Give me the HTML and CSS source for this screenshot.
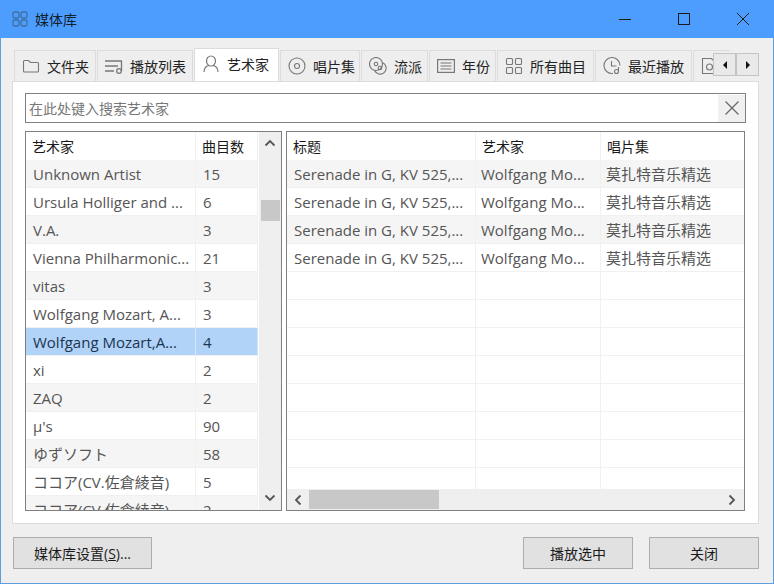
FILE: index.html
```html
<!DOCTYPE html>
<html lang="zh">
<head>
<meta charset="utf-8">
<title>媒体库</title>
<link rel="stylesheet" href="styles.css">
</head>
<body>
<div class="window">
  <header class="titlebar">
    <svg class="app-icon" width="16" height="16" viewBox="0 0 16 16"><g fill="none" stroke="#3f6f9f" stroke-width="1.3"><rect x="1" y="1" width="6" height="6" rx="1.5"/><rect x="9" y="1" width="6" height="6" rx="1.5"/><rect x="1" y="9" width="6" height="6" rx="1.5"/><rect x="9" y="9" width="6" height="6" rx="1.5"/></g></svg>
    <span class="title">媒体库</span>
    <div class="win-buttons">
      <svg class="win-btn" width="14" height="14" viewBox="0 0 14 14"><path d="M1 7.5h12" stroke="#1a1a1a" fill="none"/></svg>
      <svg class="win-btn" width="14" height="14" viewBox="0 0 14 14"><rect x="1.5" y="1.5" width="11" height="11" stroke="#1a1a1a" fill="none"/></svg>
      <svg class="win-btn" width="14" height="14" viewBox="0 0 14 14"><path d="M1 1l12 12M13 1L1 13" stroke="#1a1a1a" fill="none"/></svg>
    </div>
  </header>

  <main class="content">
    <div class="tabs-wrap">
      <div class="tabs">
        <div class="tab w-folder"><svg class="ico" width="18" height="18" viewBox="0 0 18 18"><path d="M1.5 4.5a1 1 0 0 1 1-1h4l2 2h7a1 1 0 0 1 1 1v7.500a1 1 0 0 1-1 1h-13a1 1 0 0 1-1-1z" fill="none" stroke="#777" stroke-width="1.1"/></svg><span>文件夹</span></div>
        <div class="tab w-list"><svg class="ico" width="18" height="18" viewBox="0 0 18 18"><g fill="none" stroke="#777" stroke-width="1.3"><path d="M0 4h17M0 9h13M0 14h9"/><path d="M16.500 4v10"/><circle cx="14" cy="14" r="2.300"/></g></svg><span>播放列表</span></div>
        <div class="tab active w-artist"><svg class="ico" width="18" height="18" viewBox="0 0 18 18"><g fill="none" stroke="#777" stroke-width="1.2"><ellipse cx="9" cy="6" rx="4.500" ry="5"/><path d="M2 17c0-4 2.500-6 5-6.500M16 17c0-4-2.500-6-5-6.500"/></g></svg><span>艺术家</span></div>
        <div class="tab w-album"><svg class="ico" width="18" height="18" viewBox="0 0 18 18"><g fill="none" stroke="#777" stroke-width="1.1"><circle cx="9" cy="9" r="8"/><circle cx="9" cy="9" r="2.500"/></g></svg><span>唱片集</span></div>
        <div class="tab w-genre"><svg class="ico" width="18" height="18" viewBox="0 0 18 18"><g fill="none" stroke="#777" stroke-width="1.1"><circle cx="7" cy="7" r="6.500"/><circle cx="7" cy="7" r="1.800"/><path d="M13.200 5.500a6 6 0 1 1-7.700 7.700"/><circle cx="11" cy="11" r="1.800"/></g></svg><span>流派</span></div>
        <div class="tab w-year"><svg class="ico" width="18" height="18" viewBox="0 0 18 18"><g fill="none" stroke="#777" stroke-width="1.200"><rect x="0.600" y="2.600" width="16.800" height="12.800"/><path d="M3.500 6h11M3.500 9h11M3.500 12h11"/></g></svg><span>年份</span></div>
        <div class="tab w-all"><svg class="ico" width="18" height="18" viewBox="0 0 18 18"><g fill="none" stroke="#777" stroke-width="1.100"><rect x="1.500" y="1.500" width="6" height="6" rx="1"/><rect x="10.500" y="1.500" width="6" height="6" rx="1"/><rect x="1.500" y="10.500" width="6" height="6" rx="1"/><rect x="10.500" y="10.500" width="6" height="6" rx="1"/></g></svg><span>所有曲目</span></div>
        <div class="tab w-recent"><svg class="ico" width="18" height="18" viewBox="0 0 18 18"><g fill="none" stroke="#777" stroke-width="1.100"><path d="M10 16.500A8 8 0 1 1 17 8.500"/><path d="M8.500 4v5h5"/><circle cx="13.500" cy="14.500" r="2"/><path d="M15.500 14.500V10"/></g></svg><span>最近播放</span></div>
        <div class="tab w-next"><svg class="ico" width="18" height="18" viewBox="0 0 18 18"><g fill="none" stroke="#777" stroke-width="1.100"><path d="M1.500 1.500h9l5 5v10h-14z"/><circle cx="8.500" cy="10" r="3"/></g></svg></div>
      </div>
      <div class="tab-scroller">
        <button class="scroll-btn" aria-label="向左"><svg width="6" height="8" viewBox="0 0 6 8"><path d="M5 0v8L1 4z" fill="#111"/></svg></button>
        <button class="scroll-btn" aria-label="向右"><svg width="6" height="8" viewBox="0 0 6 8"><path d="M1 0v8l4-4z" fill="#111"/></svg></button>
      </div>
    </div>

    <section class="pane">
      <div class="search">
        <span class="placeholder">在此处键入搜索艺术家</span>
        <span class="clear"><svg width="16" height="16" viewBox="0 0 16 16"><path d="M1.500 1.500l13 13M14.500 1.500l-13 13" stroke="#6b6b6b" stroke-width="1.300" fill="none"/></svg></span>
      </div>

      <div class="split">
        <div class="panel left-panel">
          <div class="table">
            <div class="row head"><div class="cell c-name">艺术家</div><div class="cell c-count">曲目数</div></div>
            <div class="row odd"><div class="cell c-name">Unknown Artist</div><div class="cell c-count">15</div></div>
            <div class="row"><div class="cell c-name">Ursula Holliger and ...</div><div class="cell c-count">6</div></div>
            <div class="row odd"><div class="cell c-name">V.A.</div><div class="cell c-count">3</div></div>
            <div class="row"><div class="cell c-name">Vienna Philharmonic...</div><div class="cell c-count">21</div></div>
            <div class="row odd"><div class="cell c-name">vitas</div><div class="cell c-count">3</div></div>
            <div class="row"><div class="cell c-name">Wolfgang Mozart, A...</div><div class="cell c-count">3</div></div>
            <div class="row selected"><div class="cell c-name">Wolfgang Mozart,A...</div><div class="cell c-count">4</div></div>
            <div class="row"><div class="cell c-name">xi</div><div class="cell c-count">2</div></div>
            <div class="row odd"><div class="cell c-name">ZAQ</div><div class="cell c-count">2</div></div>
            <div class="row"><div class="cell c-name">μ's</div><div class="cell c-count">90</div></div>
            <div class="row odd"><div class="cell c-name">ゆずソフト</div><div class="cell c-count">58</div></div>
            <div class="row"><div class="cell c-name">ココア(CV.佐倉綾音)</div><div class="cell c-count">5</div></div>
            <div class="row odd"><div class="cell c-name">ココア(CV.佐倉綾音)</div><div class="cell c-count">2</div></div>
          </div>
          <div class="vscroll">
            <svg class="arrow" width="12" height="8" viewBox="0 0 12 8"><path d="M1.500 6.500L6 2l4.500 4.500" stroke="#555" stroke-width="1.800" fill="none"/></svg>
            <div class="vthumb"></div>
            <svg class="arrow arrow-down" width="12" height="8" viewBox="0 0 12 8"><path d="M1.500 1.500L6 6l4.500-4.500" stroke="#555" stroke-width="1.800" fill="none"/></svg>
          </div>
        </div>

        <div class="panel right-panel">
          <div class="table">
            <div class="row head"><div class="cell c-title">标题</div><div class="cell c-artist">艺术家</div><div class="cell c-album">唱片集</div></div>
            <div class="row odd"><div class="cell c-title">Serenade in G, KV 525,...</div><div class="cell c-artist">Wolfgang Mo...</div><div class="cell c-album">莫扎特音乐精选</div></div>
            <div class="row"><div class="cell c-title">Serenade in G, KV 525,...</div><div class="cell c-artist">Wolfgang Mo...</div><div class="cell c-album">莫扎特音乐精选</div></div>
            <div class="row odd"><div class="cell c-title">Serenade in G, KV 525,...</div><div class="cell c-artist">Wolfgang Mo...</div><div class="cell c-album">莫扎特音乐精选</div></div>
            <div class="row"><div class="cell c-title">Serenade in G, KV 525,...</div><div class="cell c-artist">Wolfgang Mo...</div><div class="cell c-album">莫扎特音乐精选</div></div>
            <div class="row"><div class="cell c-title"></div><div class="cell c-artist"></div><div class="cell c-album"></div></div>
            <div class="row"><div class="cell c-title"></div><div class="cell c-artist"></div><div class="cell c-album"></div></div>
            <div class="row"><div class="cell c-title"></div><div class="cell c-artist"></div><div class="cell c-album"></div></div>
            <div class="row"><div class="cell c-title"></div><div class="cell c-artist"></div><div class="cell c-album"></div></div>
            <div class="row"><div class="cell c-title"></div><div class="cell c-artist"></div><div class="cell c-album"></div></div>
            <div class="row"><div class="cell c-title"></div><div class="cell c-artist"></div><div class="cell c-album"></div></div>
            <div class="row"><div class="cell c-title"></div><div class="cell c-artist"></div><div class="cell c-album"></div></div>
            <div class="row"><div class="cell c-title"></div><div class="cell c-artist"></div><div class="cell c-album"></div></div>
          </div>
          <div class="hscroll">
            <svg class="harrow" width="8" height="12" viewBox="0 0 8 12"><path d="M6.500 1.500L2 6l4.500 4.500" stroke="#555" stroke-width="1.800" fill="none"/></svg>
            <div class="hthumb"></div>
            <svg class="harrow harrow-right" width="8" height="12" viewBox="0 0 8 12"><path d="M1.500 1.500L6 6l-4.500 4.500" stroke="#555" stroke-width="1.800" fill="none"/></svg>
          </div>
        </div>
      </div>
    </section>

    <footer class="footer">
      <button class="btn btn-settings">媒体库设置(<u>S</u>)...</button>
      <div class="footer-right">
        <button class="btn">播放选中</button>
        <button class="btn">关闭</button>
      </div>
    </footer>
  </main>
</div>
</body>
</html>
```

FILE: styles.css
```css
* { box-sizing: border-box; }
html, body { margin: 0; padding: 0; }
body {
  width: 774px;
  height: 584px;
  overflow: hidden;
  font-family: "Open Sans", "Noto Sans CJK SC", sans-serif;
  font-size: 15px;
  color: #1a1a1a;
}
.window {
  width: 774px;
  height: 584px;
  display: flex;
  flex-direction: column;
  background: #efefef;
  border: 1px solid #5f9fe0;
  border-top: 0;
}
.titlebar {
  height: 38px;
  margin: 0 -1px;
  flex: none;
  display: flex;
  align-items: center;
  padding-left: 12px;
  background: #4d9dff;
}
.app-icon { flex: none; }
.title { margin-left: 7px; font-size: 14px; color: #10202f; }
.win-buttons {
  margin-left: auto;
  display: flex;
  align-items: center;
  gap: 45px;
  padding-right: 24px;
}
.win-btn { display: block; }
.content {
  flex: 1;
  display: flex;
  flex-direction: column;
  min-height: 0;
  padding: 10px 15px 14px 11px;
}
.tabs-wrap { position: relative; height: 33px; flex: none; margin-right: -1px; }
.tabs {
  display: flex;
  align-items: flex-end;
  height: 33px;
  padding-left: 2px;
  gap: 1px;
  overflow: hidden;
  width: 718px;
}
.tab {
  flex: none;
  height: 31px;
  display: flex;
  align-items: center;
  padding-left: 7px;
  background: #eeeeee;
  border: 1px solid #dcdcdc;
  border-bottom: 0;
  white-space: nowrap;
  font-size: 14px;
  color: #222;
}
.tab .ico { flex: none; margin-right: 7px; }
.tab.active { height: 33px; background: #fff; padding-bottom: 2px; }
.w-folder { width: 82px; }
.w-list { width: 96px; }
.w-artist { width: 85px; }
.w-album { width: 80px; }
.w-genre { width: 67px; }
.w-year { width: 67px; }
.w-all { width: 97px; }
.w-recent { width: 97px; }
.w-next { width: 40px; }
.tab-scroller {
  position: absolute;
  right: 0;
  top: 5px;
  display: flex;
}
.scroll-btn {
  width: 23px;
  height: 23px;
  padding: 0;
  display: flex;
  align-items: center;
  justify-content: center;
  background: #e9e9e9;
  border: 1px solid #c4c4c4;
}
.pane {
  flex: 1;
  min-height: 0;
  display: flex;
  flex-direction: column;
  background: #fff;
  border: 1px solid #dcdcdc;
  padding: 11px 12px 12px 12px;
  margin-right: -1px;
}
.search {
  flex: none;
  height: 30px;
  display: flex;
  align-items: center;
  justify-content: space-between;
  border: 1px solid #808080;
  padding: 0 0 0 3px;
  font-size: 14px;
  color: #777;
}
.clear {
  width: 27px;
  height: 27px;
  display: flex;
  align-items: center;
  justify-content: center;
  background: #f0f0f0;
}
.split {
  flex: 1;
  min-height: 0;
  display: flex;
  gap: 4px;
  margin-top: 8px;
}
.panel {
  border: 1px solid #808080;
  overflow: hidden;
  background: #fff;
}
.left-panel { width: 257px; display: flex; }
.right-panel { width: 459px; display: flex; flex-direction: column; }
.table { flex: 1; min-width: 0; min-height: 0; overflow: hidden; }
.row {
  display: flex;
  height: 28px;
  background: #fff;
  border-bottom: 1px solid #f0f0f0;
  color: #555;
}
.row.odd { background: #f5f5f5; }
.row.selected { background: #b1d3f8; color: #1c3550; }
.row.head { color: #1a1a1a; font-size: 14px; border-bottom: 0; }
.cell {
  flex: none;
  display: flex;
  align-items: center;
  padding-left: 7px;
  border-right: 1px solid #f0f0f0;
  white-space: nowrap;
  overflow: hidden;
}
.row.selected .cell { border-right-color: #d5e6fa; }
.c-name { width: 170px; }
.c-count { width: 62px; }
.c-title { width: 189px; }
.c-artist { width: 125px; padding-left: 5px; }
.c-album { width: 144px; padding-left: 5px; border-right: 0; }
.head .cell { padding-left: 6px; }
.vscroll {
  flex: none;
  width: 22px;
  margin-left: 1px;
  display: flex;
  flex-direction: column;
  align-items: center;
  background: #efefef;
}
.arrow { flex: none; margin-top: 7px; }
.vthumb { width: 19px; height: 21px; margin: 53px 0 0 0; background: #c8c8c8; }
.arrow-down { margin-top: auto; margin-bottom: 8px; }
.hscroll {
  flex: none;
  height: 21px;
  display: flex;
  align-items: center;
  background: #efefef;
  padding: 0 8px 0 7px;
}
.harrow { flex: none; }
.hthumb { width: 130px; height: 19px; margin-left: 7px; background: #c8c8c8; }
.harrow-right { margin-left: auto; }
.footer {
  flex: none;
  display: flex;
  justify-content: space-between;
  margin-top: 13px;
  padding-left: 1px;
  margin-right: -1px;
}
.footer-right { display: flex; gap: 16px; }
.btn {
  width: 110px;
  height: 32px;
  padding: 0;
  background: #e1e1e1;
  border: 1px solid #adadad;
  font: inherit;
  font-size: 14px;
  color: #1a1a1a;
}
.btn-settings { width: 139px; }
```
